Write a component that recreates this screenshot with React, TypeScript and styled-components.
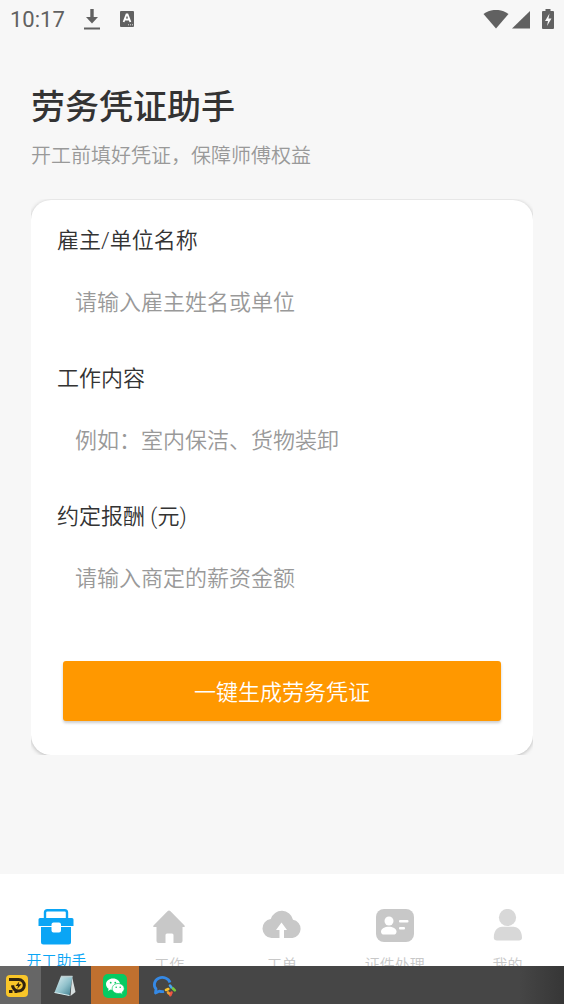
import React from "react";
import styled, { createGlobalStyle } from "styled-components";

const GlobalStyle = createGlobalStyle`
  * { box-sizing: border-box; }
  body {
    margin: 0;
    background: #f7f7f7;
    color: #333;
    font-family: Roboto, "Noto Sans CJK SC", sans-serif;
    font-weight: 350;
  }
  button, input { font: inherit; }
`;

const Screen = styled.div`
  display: flex;
  flex-direction: column;
  min-height: 100vh;
`;

const StatusBar = styled.header`
  display: flex;
  align-items: center;
  justify-content: space-between;
  height: 40px;
  padding: 0 10px;
  color: #616161;
`;

const StatusGroup = styled.div<{ $gap: number }>`
  display: flex;
  align-items: center;
  gap: ${(p) => p.$gap}px;
`;

const Clock = styled.time`
  font-size: 22px;
  font-weight: 400;
  line-height: 40px;
`;

const Content = styled.main`
  flex: 1;
  padding: 44px 31px 32px;
`;

const Title = styled.h1`
  margin: 0;
  font-size: 34px;
  font-weight: 500;
  line-height: 46px;
`;

const Subtitle = styled.p`
  margin: 12px 0 29px;
  color: #999;
  font-size: 20px;
  line-height: 28px;
`;

/* Clips the card's shadow so that it shows only in the rounded corners and along the top. */
const CardFrame = styled.div`
  overflow: hidden;
  padding-top: 1px;
`;

const Card = styled.form`
  display: flex;
  flex-direction: column;
  gap: 28px;
  padding: 25px 26px 34px;
  border-radius: 20px;
  background: #fff;
  box-shadow: 0 1px 4px rgba(0, 0, 0, 0.26);
`;

const Field = styled.div`
  display: flex;
  flex-direction: column;
  gap: 15px;
`;

const Label = styled.label`
  font-size: 22px;
  line-height: 32px;
`;

const Input = styled.input`
  width: 100%;
  height: 63px;
  padding: 0 18px 2px;
  border: 0;
  outline: 0;
  background: transparent;
  color: #333;
  font-size: 22px;
  &::placeholder { color: #999; opacity: 1; }
`;

const SubmitButton = styled.button`
  height: 60px;
  margin: 22px 6px 0;
  padding: 0 0 2px;
  border: 0;
  border-radius: 3px;
  background: #ff9800;
  box-shadow: 0 2px 3px rgba(0, 0, 0, 0.2);
  color: #fff;
  font-size: 22px;
`;

const TabBar = styled.nav`
  display: flex;
  height: 92px;
  overflow: hidden;
  background: #fff;
`;

const Tab = styled.a<{ $active?: boolean }>`
  display: flex;
  flex: 1;
  flex-direction: column;
  align-items: center;
  gap: ${(p) => (p.$active ? 4 : 8)}px;
  padding-top: 35px;
  color: ${(p) => (p.$active ? "#0aa5f5" : "#c8c8c8")};
  font-size: 15px;
  line-height: 24px;
  text-decoration: none;
  white-space: nowrap;
  svg { flex: none; }
`;

const TaskBar = styled.footer`
  display: flex;
  height: 38px;
  background: linear-gradient(to right, #464646 92%, #363636);
`;

const TaskButton = styled.button<{ $width: number; $fill: string; $inset?: number }>`
  display: flex;
  align-items: center;
  justify-content: flex-start;
  width: ${(p) => p.$width}px;
  padding: 2px 0 0 ${(p) => p.$inset ?? 12}px;
  border: 0;
  background: ${(p) => p.$fill};
`;

const DownloadIcon = () => (
  <svg width="18" height="22" viewBox="0 0 18 22" fill="none" stroke="currentColor" strokeWidth="2">
    <path d="M9 0v10" strokeWidth="3.4" />
    <path d="M3 8h12L9 14.5z" fill="currentColor" stroke="none" />
    <path d="M1 19.5h16" />
  </svg>
);

const InputMethodIcon = () => (
  <svg width="16" height="18" viewBox="0 0 16 18">
    <rect x="1" y="0" width="14" height="16" rx="1" fill="currentColor" />
    <path d="M4.6 11 7.5 3.5h1L11.4 11M5.5 8.500h5" fill="none" stroke="#fff" strokeWidth="1.8" />
    <path d="M9 13.8h1m1 0h1m1 0h1" stroke="#ddd" />
  </svg>
);

const WifiIcon = () => (
  <svg width="26" height="20" viewBox="0 0 26 20">
    <path d="M.5 4C8-1.5 18-1.5 25.5 4L13 18.5z" fill="currentColor" />
  </svg>
);

const SignalIcon = () => (
  <svg width="18" height="18" viewBox="0 0 18 18">
    <path d="M0 17.5 18 0v17.5z" fill="currentColor" />
  </svg>
);

const BatteryIcon = () => (
  <svg width="12" height="22" viewBox="0 0 12 22">
    <path d="M3.5 0h5v2H11q1 0 1 1v16q0 1-1 1H1q-1 0-1-1V3q0-1 1-1h2.5z" fill="currentColor" />
    <path d="M7.5 4.5 3 12h3l-1 5 4.5-7.5h-3z" fill="#f7f7f7" />
  </svg>
);

const ToolboxIcon = () => (
  <svg width="36" height="36" viewBox="0 0 36 36" fill="currentColor">
    <path d="M7 9V3.5Q7 1.2 9.3 1.2h17.4Q29 1.2 29 3.5V9" fill="none" stroke="currentColor" strokeWidth="2.4" />
    <path d="M2 9h32q1.5 0 1.5 1.5V17H23v-1.5q0-2-2-2h-5.5q-2 0-2 2V17H.5v-6.5Q.5 9 2 9z" />
    <path d="M3 18h10.500v3.500q0 2 2 2H21q2 0 2-2V18h10v15q0 2.500-2.500 2.500h-25Q3 35.500 3 33z" />
  </svg>
);

const HomeIcon = () => (
  <svg width="36" height="36" viewBox="0 0 36 36" fill="currentColor">
    <path d="M18 1.500Q18.700 1.500 19.500 2.300L33.500 16.500q1 1.500-.5 1.500h-1.500v14q0 2-2 2h-7v-8q0-1.500-1.500-1.500h-5q-1.500 0-1.500 1.500v8h-7q-2 0-2-2V18H3q-1.500 0-.5-1.500L16.500 2.300Q17.300 1.500 18 1.500z" />
  </svg>
);

const CloudIcon = () => (
  <svg width="40" height="36" viewBox="0 0 40 36">
    <path d="M9.500 29A9.600 9.600 0 0 1 8.800 9.900 11.500 11.500 0 0 1 31 10.800 9.200 9.200 0 0 1 30.500 29z" fill="currentColor" />
    <path d="m19.500 13.500-5.500 7.500h3.500v8H22v-8h3z" fill="#fff" />
  </svg>
);

const IdCardIcon = () => (
  <svg width="38" height="36" viewBox="0 0 38 36">
    <rect x="0" y="0" width="38" height="33" rx="8" fill="currentColor" />
    <g fill="#fff">
      <circle cx="13" cy="12" r="4.500" />
      <path d="M5 22.500c0-6.500 15.500-6.500 15.500 0 0 2.500-1.500 3-3 3h-9.500c-1.500 0-3-.5-3-3z" />
      <rect x="23" y="11" width="9.500" height="2.500" rx="1" />
      <rect x="23" y="18" width="6" height="2.500" rx="1" />
    </g>
  </svg>
);

const PersonIcon = () => (
  <svg width="30" height="36" viewBox="0 0 30 36" fill="#d8d8d8">
    <circle cx="14.5" cy="8.5" r="8.6" />
    <path d="M.8 28.500C.8 20.500 6 17.800 9 17.800h11.500c3 0 8.500 2.700 8.500 10.700 0 2.200-1.200 3-3 3h-22c-2 0-3.200-.8-3.200-3z" />
  </svg>
);

const EmulatorIcon = () => (
  <svg width="24" height="24" viewBox="0 0 24 24">
    <rect x="1" y="1" width="22" height="22" rx="4" fill="#f9c629" />
    <path d="M4 5.500h9.500a5.800 5.800 0 1 1-5.800 5.800v2" fill="none" stroke="#30230f" strokeWidth="3" />
    <path d="M4 17.500h3.500M9.500 17.500h3" stroke="#30230f" strokeWidth="3" />
    <path d="m14.300 7.500-3.800 4.500h2.600l-1 3 4.400-4.700h-2.800z" fill="#30230f" />
  </svg>
);

const NotepadIcon = () => (
  <svg width="24" height="24" viewBox="0 0 24 24">
    <defs>
      <linearGradient id="note" x1="0" y1="0" x2="1" y2="1">
        <stop offset="0" stopColor="#e2f2f4" />
        <stop offset="0.55" stopColor="#8fc0ca" />
        <stop offset="1" stopColor="#39798b" />
      </linearGradient>
    </defs>
    <path d="M19 2.500 22.500 18 17.500 22z" fill="#d8dfdf" />
    <path d="M8 2h11.500l-3 19.500-15-3z" fill="url(#note)" />
    <path d="M8 2.500h11.500" stroke="#bdced0" strokeWidth="1.5" />
    <path d="m1.500 18.500 15 3" stroke="#d8eef0" />
  </svg>
);

const WeChatIcon = () => (
  <svg width="24" height="24" viewBox="0 0 24 24">
    <rect width="24" height="24" rx="5" fill="#06cb62" />
    <path d="M10 4.500c-4 0-7 2.500-7 5.700 0 1.900 1 3.500 2.600 4.500L5 17l2.700-1.400c.7.2 1.500.3 2.300.3 4 0 7-2.500 7-5.700s-3-5.700-7-5.700z" fill="#fff" />
    <path d="M15.200 9.500c-3.400 0-6 2.200-6 5s2.600 5 6 5c.7 0 1.400-.1 2-.3l2.300 1.200-.5-2c1.300-.9 2.200-2.300 2.200-3.900 0-2.800-2.600-5-6-5z" fill="#fff" stroke="#06cb62" strokeWidth=".7" />
    <g fill="#06cb62">
      <circle cx="7.700" cy="8.700" r=".9" />
      <circle cx="12.300" cy="8.700" r=".9" />
      <circle cx="13.200" cy="13.200" r=".8" />
      <circle cx="17.200" cy="13.200" r=".8" />
    </g>
  </svg>
);

const WeComIcon = () => (
  <svg width="26" height="24" viewBox="0 0 26 24">
    <path d="M19 8.500A8 7.200 0 1 0 5 15l-.5 4 3.700-1.800q2.500.8 4.800.3" fill="none" stroke="#3589e5" strokeWidth="2.800" strokeLinejoin="round" />
    <g fill="none" strokeWidth="2.600" strokeLinecap="round">
      <path d="m19 11.500 1.500 2" stroke="#48a8ed" />
      <path d="m22 14.500 1.800 1.800" stroke="#79c83d" />
      <path d="m20.500 18.500-1.200 2.700" stroke="#ee5543" />
      <path d="m15 16 2.300-1" stroke="#fbc42d" />
      <path d="m17 18.500 1 1" stroke="#f29c30" />
    </g>
  </svg>
);

const fields = [
  { id: "employer", label: "雇主/单位名称", placeholder: "请输入雇主姓名或单位" },
  { id: "work", label: "工作内容", placeholder: "例如：室内保洁、货物装卸" },
  { id: "pay", label: "约定报酬 (元)", placeholder: "请输入商定的薪资金额" },
];

const tabs = [
  { label: "开工助手", Icon: ToolboxIcon, active: true },
  { label: "工作", Icon: HomeIcon },
  { label: "工单", Icon: CloudIcon },
  { label: "证件处理", Icon: IdCardIcon },
  { label: "我的", Icon: PersonIcon },
];

export default function App() {
  return (
    <Screen>
      <GlobalStyle />
      <StatusBar>
        <StatusGroup $gap={18}>
          <Clock>10:17</Clock>
          <DownloadIcon />
          <InputMethodIcon />
        </StatusGroup>
        <StatusGroup $gap={12}>
          <StatusGroup $gap={3}>
            <WifiIcon />
            <SignalIcon />
          </StatusGroup>
          <BatteryIcon />
        </StatusGroup>
      </StatusBar>
      <Content>
        <Title>劳务凭证助手</Title>
        <Subtitle>开工前填好凭证，保障师傅权益</Subtitle>
        <CardFrame>
          <Card onSubmit={(e) => e.preventDefault()}>
            {fields.map((f) => (
              <Field key={f.id}>
                <Label htmlFor={f.id}>{f.label}</Label>
                <Input id={f.id} placeholder={f.placeholder} />
              </Field>
            ))}
            <SubmitButton type="submit">一键生成劳务凭证</SubmitButton>
          </Card>
        </CardFrame>
      </Content>
      <TabBar>
        {tabs.map(({ label, Icon, active }) => (
          <Tab key={label} href="#" $active={active}>
            <Icon />
            <span>{label}</span>
          </Tab>
        ))}
      </TabBar>
      <TaskBar>
        <TaskButton $width={41} $fill="#666" $inset={5} aria-label="模拟器">
          <EmulatorIcon />
        </TaskButton>
        <TaskButton $width={50} $fill="transparent" aria-label="记事本">
          <NotepadIcon />
        </TaskButton>
        <TaskButton $width={48} $fill="#c0702f" aria-label="微信">
          <WeChatIcon />
        </TaskButton>
        <TaskButton $width={50} $fill="transparent" aria-label="企业微信">
          <WeComIcon />
        </TaskButton>
      </TaskBar>
    </Screen>
  );
}
